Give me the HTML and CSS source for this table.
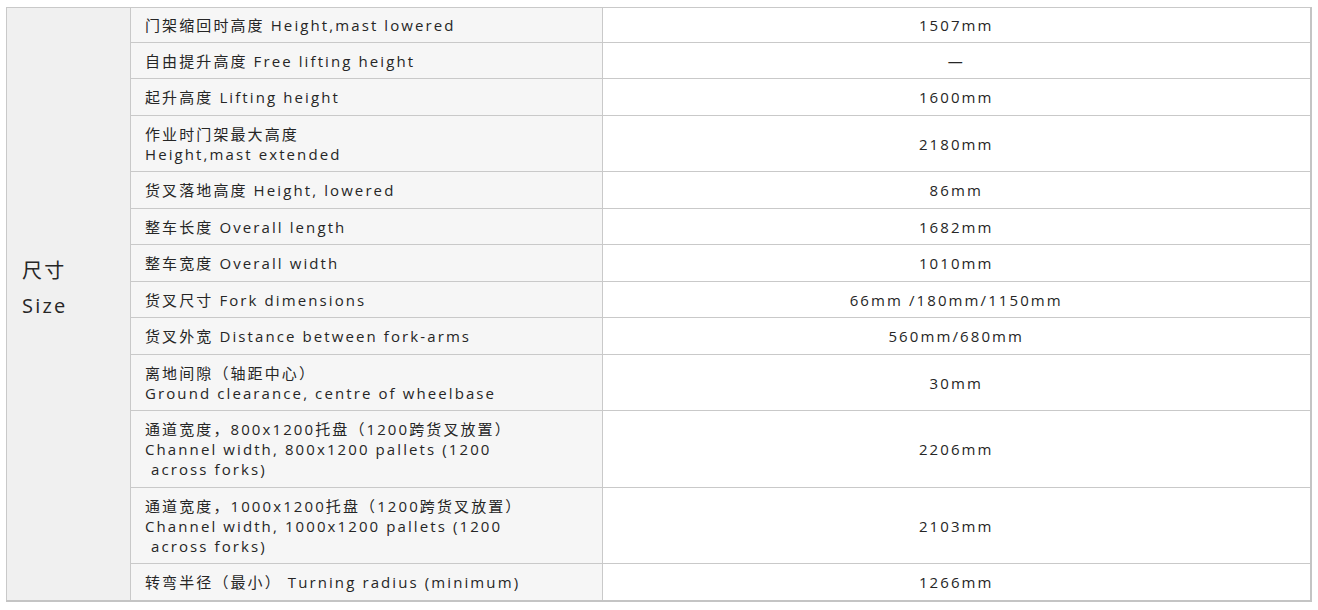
FILE: index.html
```html
<!DOCTYPE html>
<html lang="zh-CN">
<head>
<meta charset="utf-8">
<title>尺寸 Size</title>
<link rel="stylesheet" href="styles.css">
</head>
<body>
<table class="spec">
  <colgroup>
    <col class="c-group">
    <col class="c-name">
    <col class="c-value">
  </colgroup>
  <tbody>
    <tr class="first">
      <th class="group" rowspan="13">尺寸<br>Size</th>
      <td class="name">门架缩回时高度 Height,mast lowered</td>
      <td class="value">1507mm</td>
    </tr>
    <tr>
      <td class="name">自由提升高度 Free lifting height</td>
      <td class="value">—</td>
    </tr>
    <tr>
      <td class="name">起升高度 Lifting height</td>
      <td class="value">1600mm</td>
    </tr>
    <tr>
      <td class="name">作业时门架最大高度<br>Height,mast extended</td>
      <td class="value">2180mm</td>
    </tr>
    <tr>
      <td class="name">货叉落地高度 Height, lowered</td>
      <td class="value">86mm</td>
    </tr>
    <tr>
      <td class="name">整车长度 Overall length</td>
      <td class="value">1682mm</td>
    </tr>
    <tr>
      <td class="name">整车宽度 Overall width</td>
      <td class="value">1010mm</td>
    </tr>
    <tr>
      <td class="name">货叉尺寸 Fork dimensions</td>
      <td class="value">66mm /180mm/1150mm</td>
    </tr>
    <tr>
      <td class="name">货叉外宽 Distance between fork-arms</td>
      <td class="value">560mm/680mm</td>
    </tr>
    <tr>
      <td class="name">离地间隙（轴距中心）<br>Ground clearance, centre of wheelbase</td>
      <td class="value">30mm</td>
    </tr>
    <tr>
      <td class="name">通道宽度，800x1200托盘（1200跨货叉放置）<br>Channel width, 800x1200 pallets (1200<br>&nbsp;across forks)</td>
      <td class="value">2206mm</td>
    </tr>
    <tr>
      <td class="name">通道宽度，1000x1200托盘（1200跨货叉放置）<br>Channel width, 1000x1200 pallets (1200<br>&nbsp;across forks)</td>
      <td class="value">2103mm</td>
    </tr>
    <tr>
      <td class="name">转弯半径（最小） Turning radius (minimum)</td>
      <td class="value">1266mm</td>
    </tr>
  </tbody>
</table>
</body>
</html>
```

FILE: styles.css
```css
html, body {
  margin: 0;
  padding: 0;
  background: #ffffff;
}

body {
  padding: 7px 0 0 6px;
  font-family: "Open Sans", "Noto Sans CJK SC", sans-serif;
  color: #262626;
}

.spec {
  border-collapse: collapse;
  table-layout: fixed;
  width: 1304px;
  border: 1px solid #bdbdbd;
  border-right: 2px solid #c4c4c4;
  border-bottom: 2px solid #c4c4c4;
}

.c-group { width: 124px; }
.c-name { width: 472px; }
.c-value { width: 708px; }

.spec th,
.spec td {
  border: 1px solid #c9c9c9;
  font-size: 15px;
  line-height: 20px;
  letter-spacing: 2.1px;
  font-weight: 400;
  padding: 8px 14px 7.5px 14px;
  vertical-align: middle;
  color: #262626;
}

.spec .first td {
  padding-top: 6.5px;
  padding-bottom: 7px;
}

.spec .group {
  background: #f0f0f0;
  text-align: left;
  font-size: 20px;
  line-height: 35px;
  letter-spacing: 2.2px;
  padding: 0 10px 32px 15px;
}

.spec .name {
  background: #f6f6f6;
  text-align: left;
}

.spec .value {
  background: #ffffff;
  text-align: center;
}
```
